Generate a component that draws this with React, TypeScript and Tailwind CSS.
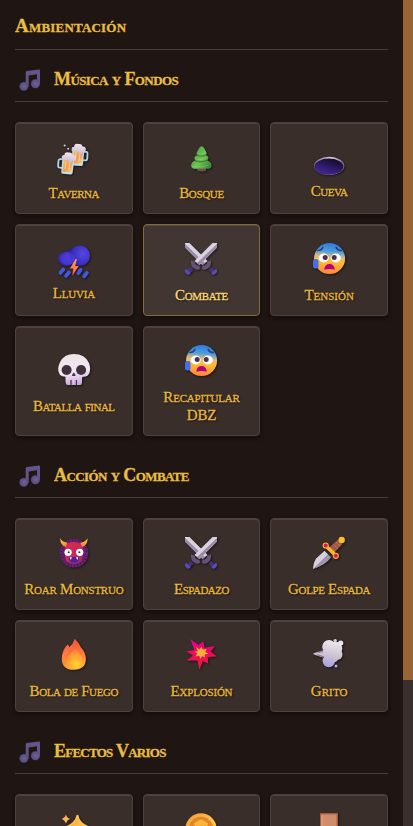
import React from "react";

type Kind = "beer" | "tree" | "hole" | "storm" | "swords" | "anxious" | "skull" | "ogre" | "dagger" | "fire" | "boom" | "puff" | "sparkles" | "coin" | "door";

type Sound = {
  lines: string[];
  icon: Kind;
  tracking: string;
  pad?: string;
  gap?: string;
  active?: boolean;
};

function Defs() {
  return (
    <svg className="absolute h-0 w-0" aria-hidden="true">
      <defs>
        <radialGradient id="note" cx=".55" cy=".5" r=".6"><stop stopColor="#70639f" /><stop offset="1" stopColor="#51466f" /></radialGradient>
        <linearGradient id="beer" x1="0" y1="0" x2="1" y2="1"><stop stopColor="#f5c15c" /><stop offset=".55" stopColor="#ef9b55" /><stop offset="1" stopColor="#fad28a" /></linearGradient>
        <linearGradient id="foam" x1="0" y1="0" x2="0" y2="1"><stop stopColor="#f1e8f0" /><stop offset="1" stopColor="#c7b4c7" /></linearGradient>
        <linearGradient id="tree" x1="0" y1="0" x2="1" y2=".7"><stop stopColor="#3f9442" /><stop offset=".6" stopColor="#70c453" /><stop offset="1" stopColor="#418b43" /></linearGradient>
        <linearGradient id="hole" x1=".15" y1="1" x2=".75" y2="0"><stop stopColor="#46299a" /><stop offset=".5" stopColor="#2f1b69" /><stop offset="1" stopColor="#110a20" /></linearGradient>
        <linearGradient id="rim"><stop stopColor="#7d678d" /><stop offset=".6" stopColor="#ded1e4" /><stop offset="1" stopColor="#765d90" /></linearGradient>
        <radialGradient id="cloud" cx=".65" cy=".4" r=".7"><stop stopColor="#5547e8" /><stop offset="1" stopColor="#3024a8" /></radialGradient>
        <linearGradient id="bolt" x1="0" y1="0" x2="0" y2="1"><stop stopColor="#ffa34b" /><stop offset="1" stopColor="#ff5553" /></linearGradient>
        <linearGradient id="face" x1=".55" y1="0" x2=".45" y2="1"><stop stopColor="#2f7bde" /><stop offset=".26" stopColor="#4a9cdf" /><stop offset=".45" stopColor="#e2bb78" /><stop offset=".6" stopColor="#ffbd31" /><stop offset="1" stopColor="#ff8641" /></linearGradient>
        <linearGradient id="bone" x1=".3" y1="0" x2=".5" y2="1"><stop stopColor="#eee4e7" /><stop offset=".6" stopColor="#efe9f2" /><stop offset="1" stopColor="#cda6de" /></linearGradient>
        <linearGradient id="ogre" x1="0" y1="0" x2="1" y2="1"><stop stopColor="#e02b50" /><stop offset=".6" stopColor="#c62957" /><stop offset="1" stopColor="#8c2466" /></linearGradient>
        <linearGradient id="horn" x1="0" y1="0" x2="0" y2="1"><stop stopColor="#ffd23c" /><stop offset="1" stopColor="#ee7f2c" /></linearGradient>
        <linearGradient id="flame" x1=".3" y1="0" x2=".5" y2="1"><stop stopColor="#f44f3e" /><stop offset=".6" stopColor="#ff7d36" /><stop offset="1" stopColor="#ffb536" /></linearGradient>
        <radialGradient id="inner" cx=".6" cy=".78" r=".7"><stop stopColor="#ffd431" /><stop offset="1" stopColor="#ff8b35" /></radialGradient>
        <linearGradient id="boom" x1=".4" y1="0" x2=".4" y2="1"><stop stopColor="#e50087" /><stop offset="1" stopColor="#f21a32" /></linearGradient>
        <linearGradient id="puff" gradientUnits="userSpaceOnUse" x1="20" y1="0" x2="14" y2="28"><stop stopColor="#f0ebef" /><stop offset=".6" stopColor="#cbc2d0" /><stop offset="1" stopColor="#a99be9" /></linearGradient>
        <linearGradient id="gold" x1="0" y1="0" x2="1" y2="1"><stop stopColor="#f19b39" /><stop offset=".6" stopColor="#ffc94c" /><stop offset="1" stopColor="#f5a52a" /></linearGradient>
      </defs>
    </svg>
  );
}

function Mug({ left }: { left?: boolean }) {
  return (
    <g>
      {left
        ? <path d="M5 17H2.4Q1 17 1 19v4q0 2 1.5 2H5" fill="none" stroke="#a7d5e9" strokeWidth="1.7" />
        : <path d="M15 17h2.6q1.4 0 1.4 2v4q0 2-1.5 2H15" fill="none" stroke="#a7d5e9" strokeWidth="1.7" />}
      <path d="M4.5 13h11.5l-.8 16q-.1 1.5-1.6 1.5H6q-1.4 0-1.5-1.5Z" fill="#b9e0ef" />
      <path d="M5.8 15h9l-.7 13.5H5.7Z" fill="url(#beer)" />
      <path d="M8 18v8m3.5-8v8" stroke="#fbdda0" strokeWidth="1.2" opacity=".6" />
      <path d="M4 17q-1-4 2-4 0-3.7 4-3 3-.8 4 2 4 0 3 4-.6 2-3 1.3-1 5-3 2-.5-2.5-2-2.3Q5 18 4 17" fill="url(#foam)" />
    </g>
  );
}

function Sword() {
  return (
    <g>
      <path d="M27.5 0H32v4.5L14.5 22l-5-4Z" fill="#d9d3df" />
      <path d="M32 1v3.5L14.5 22 12 20Z" fill="#9a8ca8" />
      <path d="m5.5 24 3 3L4.3 30.5 1.6 28Z" fill="#43347e" />
      <path d="m1.2 26 4.5 4q-.8 2-2.8 1.8Q-.2 30-.1 28q.1-1.5 1.3-2" fill="#5a4dba" />
      <path d="M6 17.5q-.5 6.2 3.2 8 3.8 2.5 6 0l-1-3q-4 .5-4.6-4Z" fill="#655276" />
    </g>
  );
}

function Art({ kind }: { kind: Kind }) {
  switch (kind) {
    case "beer":
      return <><g transform="translate(9.4 -7.6) rotate(3 10 20) scale(1.06)"><Mug /></g><g transform="translate(-.6 .8) rotate(5 10 20) scale(1.06)"><Mug left /></g><circle cx="6.7" cy="4.5" r="1.1" fill="#cfc9d0" /><circle cx="10.2" cy="7.8" r="1" fill="#d8ccd8" /></>;
    case "tree":
      return <g transform="translate(1 .6) scale(.95)"><path d="M12 27h9v4q-4.5 1-9 0Z" fill="#794d51" /><path d="M16.5 4.8q1.4 0 2.7 2.3l2.2 4q1.2 2.1-.8 3 3.8 1.6 2.8 4.2-.5 1-1.3 1.2 4.8 2 4.8 5.7 0 3.3-3.6 3.3H8.7q-3.3-.2-3.3-3.4 0-3.5 4.9-5.5-2.2-.7-1.4-3 .9-1.8 3.2-2.6-1.7-.6-.8-2.6l2.6-4.7q1.2-1.9 2.6-1.9" fill="url(#tree)" /><path d="M11.5 14.2q5 2.2 9.3-.1M9.5 20.2q7 2.4 12.8-.6" stroke="#2c7838" strokeWidth="1.5" fill="none" opacity=".7" /><path d="M13 12.5q4 1.3 6.5-.4M11 18.4q6 1.4 10-.7M9 26q8 2 14-1" stroke="#9ade6c" strokeWidth="1" fill="none" opacity=".45" /></g>;
    case "hole":
      return <><ellipse cx="16.2" cy="24.8" rx="15.2" ry="9" fill="url(#rim)" /><ellipse cx="15.9" cy="25.7" rx="14.4" ry="8.1" fill="url(#hole)" /></>;
    case "storm":
      return <><circle cx="12" cy="12" r="5.5" fill="#2c228e" /><ellipse cx="8.6" cy="15.8" rx="8.6" ry="7.1" fill="url(#cloud)" /><circle cx="21.8" cy="12.8" r="10.3" fill="url(#cloud)" /><ellipse cx="10" cy="16" rx="7" ry="5.8" fill="#493bd3" opacity=".8" /><g stroke="#4057e4" strokeWidth="3.8" strokeLinecap="round"><path d="m5.3 26.5-2.8 3.4m8.4-.4-2.8 3.4m14.5-6-2.3 3.4m8.6-.4-2.7 3.4" /></g><path d="M17.6 16 12 25.6h3.2L14.3 33l6.4-10.1h-3.5L18.8 16Z" fill="url(#bolt)" /></>;
    case "swords":
      return <><g transform="translate(32 0) scale(-1 1)"><Sword /></g><Sword /></>;
    case "anxious":
      return <><circle cx="16.6" cy="15.6" r="15.5" fill="url(#face)" /><path d="M5 7.5q3.5 0 4.8-3M23.2 4.5q1.5 3 5 3" stroke="#29437c" strokeWidth="1.7" fill="none" strokeLinecap="round" /><ellipse cx="10.7" cy="15" rx="5.1" ry="4.4" fill="#fff" /><ellipse cx="22.8" cy="15" rx="5.1" ry="4.4" fill="#fff" /><circle cx="12.2" cy="14.6" r="2.5" fill="#4b314e" /><circle cx="21.2" cy="14.6" r="2.5" fill="#4b314e" /><path d="M11.3 26.7q.5-5.6 5.2-5.6t5.3 5.6q-5-1.3-10.5 0" fill="#b6007e" /><rect x="0" y="16" width="5.5" height="9.5" rx="2.5" fill="#456eed" /></>;
    case "skull":
      return <><path d="M16 0Q27 0 31 9q2.8 8-1.2 12.5-1.3 1.2-5.6 1.4l-.3 6q-.1 2.2-2.4 2.2H10.1q-2.3 0-2.4-2.3l-.3-6q-3.6-.1-5.3-1.7Q-1.7 15.6 2 8.2 6 0 16 0" fill="url(#bone)" /><circle cx="8.6" cy="16" r="5" fill="#412f3c" /><circle cx="23.1" cy="16" r="5" fill="#412f3c" /><path d="M15.8 18.5q2.8 3 1.4 3.5h-1.4l-1.4-.1q-1.4-.3 1.4-3.4" fill="#59354f" /><path d="M13 26v5.3m5.4-5.3v5.3" stroke="#4a3946" strokeWidth="1.3" /></>;
    case "ogre":
      return <g transform="translate(.6 .4) scale(.96)"><circle cx="16" cy="16.5" r="13" fill="none" stroke="#652276" strokeWidth="3.8" strokeDasharray="2.8 .5" /><circle cx="16" cy="16" r="12.6" fill="#641e67" /><path d="M8 6.5q8-3.5 16 0 3 9 0 18Q16 31 8 24.5q-3.2-9 0-18" fill="url(#ogre)" /><path d="M1.6 1Q4 5 9 5.5L7.5 10Q1.7 9 1.6 1m28.6 0q-2.6 4.4-7.4 4.5l1.5 4.5q5.8-1 5.9-9" fill="url(#horn)" /><circle cx="9.9" cy="15.5" r="3.8" fill="#fff" /><circle cx="22" cy="15.5" r="3.8" fill="#fff" /><circle cx="10.5" cy="15.5" r="1.1" fill="#44265c" /><circle cx="21.6" cy="15.5" r="1.1" fill="#44265c" /><path d="M10.5 20.5h11q-.3 6-5.5 6t-5.5-6" fill="#4a239c" /><path d="m11.5 20.6 1.3 3 1-3m4.4 0 1.2 3 1.2-3" fill="#fff" /></g>;
    case "dagger":
      return <><path d="m11.5 14 6.5 6.3Q13 28 0 32q.3-6 3-10.2Z" fill="#9e95ad" /><path d="m11.5 14 3.3 3.2L0 32q.3-6 3-10.2Z" fill="#d6d1dd" /><path d="m25 2.5 4.6 4.4-8.8 9L15.7 11Z" fill="#9c5948" /><path d="m23 5 4.2 4m-6.5-1.5L25 12m-7-1.5 4 4" stroke="#bc725a" strokeWidth="1" /><circle cx="28.7" cy="3" r="3.2" fill="#f8bf2b" /><path d="m13 9 9.8 9.5" stroke="#f8b92f" strokeWidth="3.6" /><circle cx="12.7" cy="8.5" r="3.1" fill="#f5b434" /><circle cx="12.7" cy="8.5" r="2" fill="#df1757" /><circle cx="22.8" cy="18.8" r="3.1" fill="#f5b434" /><circle cx="22.8" cy="18.8" r="2" fill="#df1757" /></>;
    case "fire":
      return <><path d="M16.7-.3q4 3.7 6 8.3 5.2 5.7 5.2 12.1Q27.8 30.6 16 30.8 4 31 3.8 20 3.7 11.8 9.4 5.5q2.1 1.1 2.2 3Q15 5 16.7-.3" fill="url(#flame)" /><path d="M17.5 10q7.8 7.1 7.7 12.6-.2 7.6-8.8 7.6-8.2 0-8.4-7Q8 17 17.5 10" fill="url(#inner)" /><path d="M14 6Q6 15.5 6.3 22M10 7.5Q4.2 15 5 22" fill="none" stroke="#ff9d66" strokeWidth=".8" opacity=".65" /></>;
    case "boom":
      return <g transform="translate(1.4 0)"><path d="m4 0 8 6L17 2.5l1.2 6.3L28.6 7l-4.2 5.6 5.9 4.9-8.8.6.2 6.4-5.2-2.5-3.5 8.8-2-9.4-10.6 0 6.2-5L0 12.4l7.9-1.3Z" fill="url(#boom)" /><path d="m9.6 8 3.9 2.4 1.3-2.6 1.7 2.8 3.6-.6-1.2 3 3 1.7-3.6.9.2 3-2.8-1.6-1.8 3-1-3.2-4 .6 2.1-3-3-1.6 3.4-.8Z" fill="#ffae38" /></g>;
    case "puff":
      return <><g fill="url(#puff)"><circle cx="16" cy="7.8" r="6.8" /><circle cx="22.5" cy="9.5" r="6.8" /><circle cx="24.3" cy="15.5" r="5.2" /><circle cx="16.5" cy="14.5" r="7" /><circle cx="15.8" cy="22" r="6.2" /><circle cx="20.5" cy="18.5" r="5" /><path d="M.5 14.3 10 11.5v7Q5 17 .5 15.3Z" /></g><path d="m4 15.6 6 2M5 13.3l5-.6" stroke="#5d5062" strokeWidth=".7" /><circle cx="22.2" cy="1.6" r="1.7" fill="#dad1dd" /><circle cx="27.7" cy="4" r="2.6" fill="#eee5ef" /><circle cx="23" cy="27" r="1.5" fill="#b4a8e9" /></>;
    case "sparkles":
      return <><path d="M19.5 2q1.7 9 11 12-9.5 3.5-11 14-2-10.5-11-14 9-3.5 11-12" fill="url(#gold)" stroke="#ffc453" strokeWidth="1.5" strokeLinejoin="round" /><path d="M8 1.4q.9 3.6 4.2 4.4Q9 7 8 10.5 6.8 7 3.9 6 7 5 8 1.4" fill="#ffb44f" /></>;
    case "coin":
      return <><circle cx="16" cy="16" r="15.7" fill="url(#gold)" /><circle cx="16" cy="16.2" r="12.4" fill="#e38528" /><path d="m16 6.3 7 4v2H9v-2Zm-6 6h12v10H10Z" fill="#ffb638" /><path d="M12 12.5v5m4-5v5m4-5v5" stroke="#dd8830" /></>;
    default:
      return <><rect x="7" y="0" width="18" height="32" rx=".7" fill="#a95e42" /><rect x="8.5" y="1.5" width="15" height="29" fill="#cf8d6b" /><path d="M9 2v29" stroke="#f0ad79" strokeWidth="1" /></>;
  }
}

function Card({ sound }: { sound: Sound }) {
  return (
    <button
      className={`flex min-h-[92px] flex-col items-center rounded border shadow-[0_2px_4px_rgba(0,0,0,0.4),inset_0_1px_0_rgba(255,255,255,0.1)] ${sound.pad ?? "pt-[18px]"} ${
        sound.active
          ? "border-[#826b3a] bg-[#423632] text-[#f8d979]"
          : "border-[#4c413f] bg-[#3a2e2b] text-[#e6b93c]"
      }`}
    >
      <svg viewBox="0 0 32 32" className="size-8 shrink-0 overflow-visible drop-shadow-[1px_1px_1px_rgba(0,0,0,0.55)]">
        <Art kind={sound.icon} />
      </svg>
      {sound.lines.length > 0 && (
        <span className={`flex flex-col items-center whitespace-nowrap text-[15px] leading-[18px] [font-variant-caps:small-caps] [-webkit-text-stroke:0.3px] [text-shadow:1px_1px_2px_rgba(0,0,0,0.8)] ${sound.gap ?? "mt-[11px]"} ${sound.tracking}`}>
          {sound.lines.map((line) => <span key={line}>{line}</span>)}
        </span>
      )}
    </button>
  );
}

function Section({ title, tracking, sounds, first }: { title: string; tracking: string; sounds: Sound[]; first?: boolean }) {
  return (
    <section className={first ? "" : "mt-2.5"}>
      <header className="flex h-[52px] items-center gap-[9px] border-b border-[#493e3c]">
        <svg viewBox="0 0 30 30" className="mt-[9px] size-[30px] shrink-0">
          <path d="M10.7 21V7.1q0-1 1.1-1.2L24 4.5q1-.1 1 1V19h-3V9.2l-8.3 1.2V22Z" fill="#62558b" />
          <circle cx="8.8" cy="21.3" r="4.4" fill="url(#note)" />
          <circle cx="20.4" cy="18.7" r="4.5" fill="url(#note)" />
        </svg>
        <h3 className={`pt-1.5 text-lg leading-5 font-bold whitespace-nowrap [font-variant-caps:small-caps] [-webkit-text-stroke:0.3px] ${tracking}`}>{title}</h3>
      </header>
      <div className="mt-5 grid grid-cols-3 gap-2.5">
        {sounds.map((sound) => <Card key={sound.icon + sound.lines.join(" ")} sound={sound} />)}
      </div>
    </section>
  );
}

const music: Sound[] = [
  { lines: ["Taverna"], icon: "beer", tracking: "tracking-[-0.45px]" },
  { lines: ["Bosque"], icon: "tree", tracking: "tracking-[-0.35px]" },
  { lines: ["Cueva"], icon: "hole", tracking: "tracking-[-0.45px]", gap: "mt-[9px]" },
  { lines: ["Lluvia"], icon: "storm", tracking: "tracking-[-0.2px]", gap: "mt-[9px]" },
  { lines: ["Combate"], icon: "swords", tracking: "tracking-[-0.35px]", active: true },
  { lines: ["Tensión"], icon: "anxious", tracking: "tracking-[0px]" },
  { lines: ["Batalla final"], icon: "skull", tracking: "tracking-[-0.5px]", pad: "pt-[27px]" },
  { lines: ["Recapitular", "DBZ"], icon: "anxious", tracking: "tracking-[-0.2px]", pad: "pt-[18px] pb-[11px]" },
];

const action: Sound[] = [
  { lines: ["Roar Monstruo"], icon: "ogre", tracking: "tracking-[-0.25px]" },
  { lines: ["Espadazo"], icon: "swords", tracking: "tracking-[-0.5px]" },
  { lines: ["Golpe Espada"], icon: "dagger", tracking: "tracking-[-0.35px]" },
  { lines: ["Bola de Fuego"], icon: "fire", tracking: "tracking-[-0.4px]" },
  { lines: ["Explosión"], icon: "boom", tracking: "tracking-[-0.2px]" },
  { lines: ["Grito"], icon: "puff", tracking: "tracking-[0.1px]" },
];

const effects: Sound[] = [
  { lines: [], icon: "sparkles", tracking: "" },
  { lines: [], icon: "coin", tracking: "" },
  { lines: [], icon: "door", tracking: "" },
];

export default function App() {
  return (
    <div className="flex h-[826px] w-[413px] overflow-hidden bg-[#1f1512] font-['Liberation_Serif',serif] text-[#e8bd45]">
      <Defs />
      <main className="h-[826px] flex-1 overflow-hidden px-[15px]">
        <h2 className="h-[50px] border-b border-[#493e3c] pt-4 text-[19px] leading-5 font-bold tracking-[0.2px] whitespace-nowrap [font-variant-caps:small-caps] [-webkit-text-stroke:0.3px]">Ambientación</h2>
        <Section first title="Música y Fondos" tracking="tracking-[-0.6px]" sounds={music} />
        <Section title="Acción y Combate" tracking="tracking-[-0.6px]" sounds={action} />
        <Section title="Efectos Varios" tracking="tracking-[-0.75px]" sounds={effects} />
      </main>
      <div className="w-2.5 shrink-0 bg-[#3a2f2c]">
        <div className="h-[680px] bg-[#986433]" />
      </div>
    </div>
  );
}
